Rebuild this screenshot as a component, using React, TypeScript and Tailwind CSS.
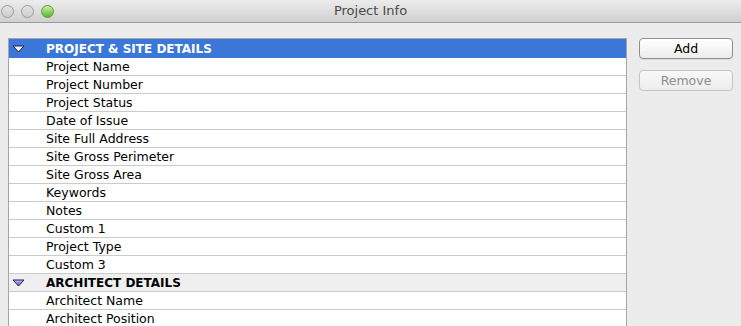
import React from "react";

type Row = { label: string; header?: boolean; selected?: boolean };

const rows: Row[] = [
  { label: "PROJECT & SITE DETAILS", header: true, selected: true },
  { label: "Project Name" },
  { label: "Project Number" },
  { label: "Project Status" },
  { label: "Date of Issue" },
  { label: "Site Full Address" },
  { label: "Site Gross Perimeter" },
  { label: "Site Gross Area" },
  { label: "Keywords" },
  { label: "Notes" },
  { label: "Custom 1" },
  { label: "Project Type" },
  { label: "Custom 3" },
  { label: "ARCHITECT DETAILS", header: true },
  { label: "Architect Name" },
  { label: "Architect Position" },
];

const Disclosure = ({ selected }: { selected?: boolean }) => (
  <svg width="13" height="8" viewBox="0 0 13 8">
    <defs>
      <linearGradient id="tri" x1="0" y1="0" x2="0" y2="1">
        <stop offset="0" stopColor="#c4c4ee" />
        <stop offset="1" stopColor="#5656b0" />
      </linearGradient>
    </defs>
    <polygon
      points="1,1 12,1 6.5,7"
      fill={selected ? "#f2f2ff" : "url(#tri)"}
      stroke="#1c1c58"
      strokeWidth="1"
      strokeLinejoin="round"
    />
  </svg>
);

const Light = ({ green }: { green?: boolean }) => (
  <div
    className={
      green
        ? "w-[13px] h-[13px] rounded-full border border-[#5f9a3a] bg-gradient-to-b from-[#c6f0a0] to-[#58b72c]"
        : "w-[13px] h-[13px] rounded-full border border-[#9c9c9c] bg-gradient-to-b from-[#e4e4e4] to-[#cdcdcd]"
    }
  />
);

const App = () => {
  return (
    <div
      className="w-[741px] h-[326px] overflow-hidden bg-[#ececec]"
      style={{ fontFamily: '"DejaVu Sans", "Liberation Sans", sans-serif' }}
    >
      <div className="relative h-[23px] flex items-center justify-center bg-gradient-to-b from-[#ececec] to-[#d0d0d0] border-b border-[#9a9a9a]">
        <div className="absolute left-[1px] top-[5px] flex gap-[7px]">
          <Light />
          <Light />
          <Light green />
        </div>
        <span className="text-[13px] text-[#4a4a4a]">Project Info</span>
      </div>

      <div className="flex pl-[8px] pt-[15px]">
        <div className="w-[619px] border-t border-l border-r border-[#a5a5a5] bg-white">
          {rows.map((row, i) =>
            row.header ? (
              <div
                key={i}
                className={
                  row.selected
                    ? "flex items-center h-[19px] bg-[#3a77d8] text-white font-bold text-[12px]"
                    : "flex items-center h-[18px] bg-[#efefef] border-b border-[#cbcbcb] text-black font-bold text-[12px]"
                }
              >
                <div className="w-[37px] pl-[3px] flex items-center">
                  <Disclosure selected={row.selected} />
                </div>
                <span>{row.label}</span>
              </div>
            ) : (
              <div
                key={i}
                className="flex items-center h-[18px] pt-[2px] border-b border-[#cbcbcb] text-black text-[12.5px] pl-[37px]"
              >
                {row.label}
              </div>
            )
          )}
        </div>

        <div className="ml-[12px] flex flex-col gap-[11px]">
          <button className="w-[94px] h-[21px] pt-[1px] rounded-[4px] border border-[#8e8e8e] bg-gradient-to-b from-white to-[#ececec] text-[12.5px] text-black shadow-[0_1px_0_rgba(0,0,0,0.08)]">
            Add
          </button>
          <button className="w-[94px] h-[21px] pt-[1px] rounded-[4px] border border-[#c4c4c4] bg-gradient-to-b from-[#f8f8f8] to-[#ededed] text-[12.5px] text-[#8d8d8d]">
            Remove
          </button>
        </div>
      </div>
    </div>
  );
};

export default App;
